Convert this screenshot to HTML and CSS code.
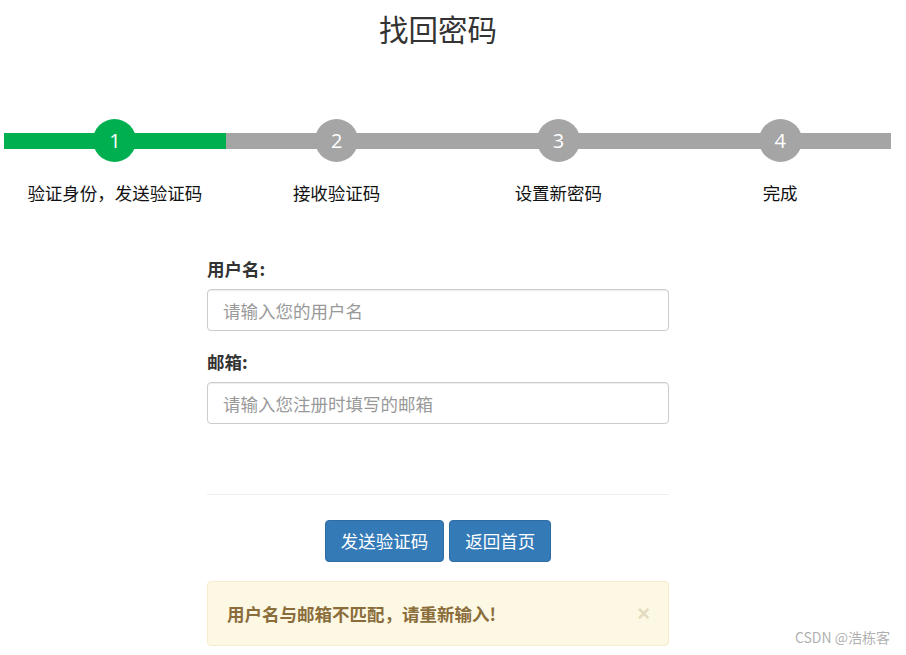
FILE: index.html
```html
<!DOCTYPE html>
<html lang="zh-CN">
<head>
<meta charset="utf-8">
<title>找回密码</title>
<link rel="stylesheet" href="styles.css">
</head>
<body>
<div class="page">
  <h1 class="title">找回密码</h1>
  <div class="steps">
    <div class="step active">
      <div class="track"><div class="bar"></div><div class="dot">1</div></div>
      <div class="label">验证身份，发送验证码</div>
    </div>
    <div class="step">
      <div class="track"><div class="bar"></div><div class="dot">2</div></div>
      <div class="label">接收验证码</div>
    </div>
    <div class="step">
      <div class="track"><div class="bar"></div><div class="dot">3</div></div>
      <div class="label">设置新密码</div>
    </div>
    <div class="step">
      <div class="track"><div class="bar"></div><div class="dot">4</div></div>
      <div class="label">完成</div>
    </div>
  </div>
  <form class="form">
    <label class="field-label">用户名:</label>
    <input class="input" type="text" placeholder="请输入您的用户名">
    <label class="field-label second">邮箱:</label>
    <input class="input" type="text" placeholder="请输入您注册时填写的邮箱">
    <hr class="divider">
    <div class="actions">
      <button type="button" class="btn">发送验证码</button>
      <button type="button" class="btn">返回首页</button>
    </div>
    <div class="alert">
      <span class="alert-text">用户名与邮箱不匹配，请重新输入!</span>
      <span class="close">×</span>
    </div>
  </form>
  <div class="watermark">CSDN @浩栋客</div>
</div>
</body>
</html>
```
FILE: styles.css
```css
* { box-sizing: border-box; }
html, body { margin: 0; padding: 0; background: #fff; }
body {
  font-family: "Noto Sans CJK SC", "Noto Sans", sans-serif;
  color: #333;
}
.page { position: relative; width: 906px; height: 655px; overflow: hidden; }
.title {
  margin: 0;
  padding: 9px 30px 0 0;
  text-align: center;
  font-size: 29.5px;
  font-weight: 400;
  line-height: 38px;
  color: #333;
}
.steps {
  display: flex;
  margin: 72px 0 0 4px;
  width: 887px;
}
.step { flex: 1; display: flex; flex-direction: column; align-items: stretch; }
.track {
  display: grid;
  height: 43px;
  align-items: center;
}
.bar, .dot { grid-area: 1 / 1; }
.bar { height: 16px; background: #a5a5a5; }
.dot {
  justify-self: center;
  width: 43px;
  height: 43px;
  border-radius: 50%;
  background: #a5a5a5;
  color: #fff;
  font-family: "Open Sans", "Noto Sans", sans-serif;
  font-size: 20px;
  line-height: 43px;
  text-align: center;
}
.step.active .bar, .step.active .dot { background: #00b050; }
.label {
  margin-top: 19px;
  text-align: center;
  font-size: 17.5px;
  line-height: 24px;
  color: #111;
}
.form {
  display: flex;
  flex-direction: column;
  width: 462px;
  margin: 53px 0 0 207px;
}
.field-label {
  font-size: 17.5px;
  font-weight: 700;
  line-height: 22px;
  color: #333;
  margin-bottom: 9px;
}
.field-label.second { margin-top: 20px; }
.input {
  height: 42px;
  border: 1px solid #ccc;
  border-radius: 4px;
  padding: 0 15px;
  font-family: "Noto Sans CJK SC", sans-serif;
  font-size: 17.5px;
  color: #555;
  box-shadow: inset 0 1px 1px rgba(0,0,0,.075);
}
.input::placeholder { color: #999; }
.divider {
  margin: 70px 0 0;
  border: 0;
  border-top: 1px solid #eee;
  width: 100%;
}
.actions {
  display: flex;
  justify-content: center;
  gap: 5px;
  margin-top: 25px;
}
.btn {
  height: 42px;
  padding: 0 15px;
  border: 1px solid #2e6da4;
  border-radius: 4px;
  background: #337ab7;
  color: #fff;
  font-family: "Noto Sans CJK SC", sans-serif;
  font-size: 17.5px;
  line-height: 40px;
}
.alert {
  display: flex;
  align-items: center;
  justify-content: space-between;
  height: 65px;
  margin-top: 19px;
  padding: 0 19px 0 19px;
  background: #fcf8e3;
  border: 1px solid #faebcc;
  border-radius: 4px;
  color: #8a6d3b;
}
.alert-text { font-size: 17.5px; font-weight: 700; }
.close {
  font-family: "Liberation Sans", sans-serif;
  font-size: 22px;
  font-weight: 700;
  color: #8a6d3b;
  opacity: 0.2;
  margin-right: -1px;
}
.watermark {
  position: absolute;
  right: 16px;
  bottom: 8px;
  font-size: 14px;
  color: rgba(120,120,120,0.6);
}
```
